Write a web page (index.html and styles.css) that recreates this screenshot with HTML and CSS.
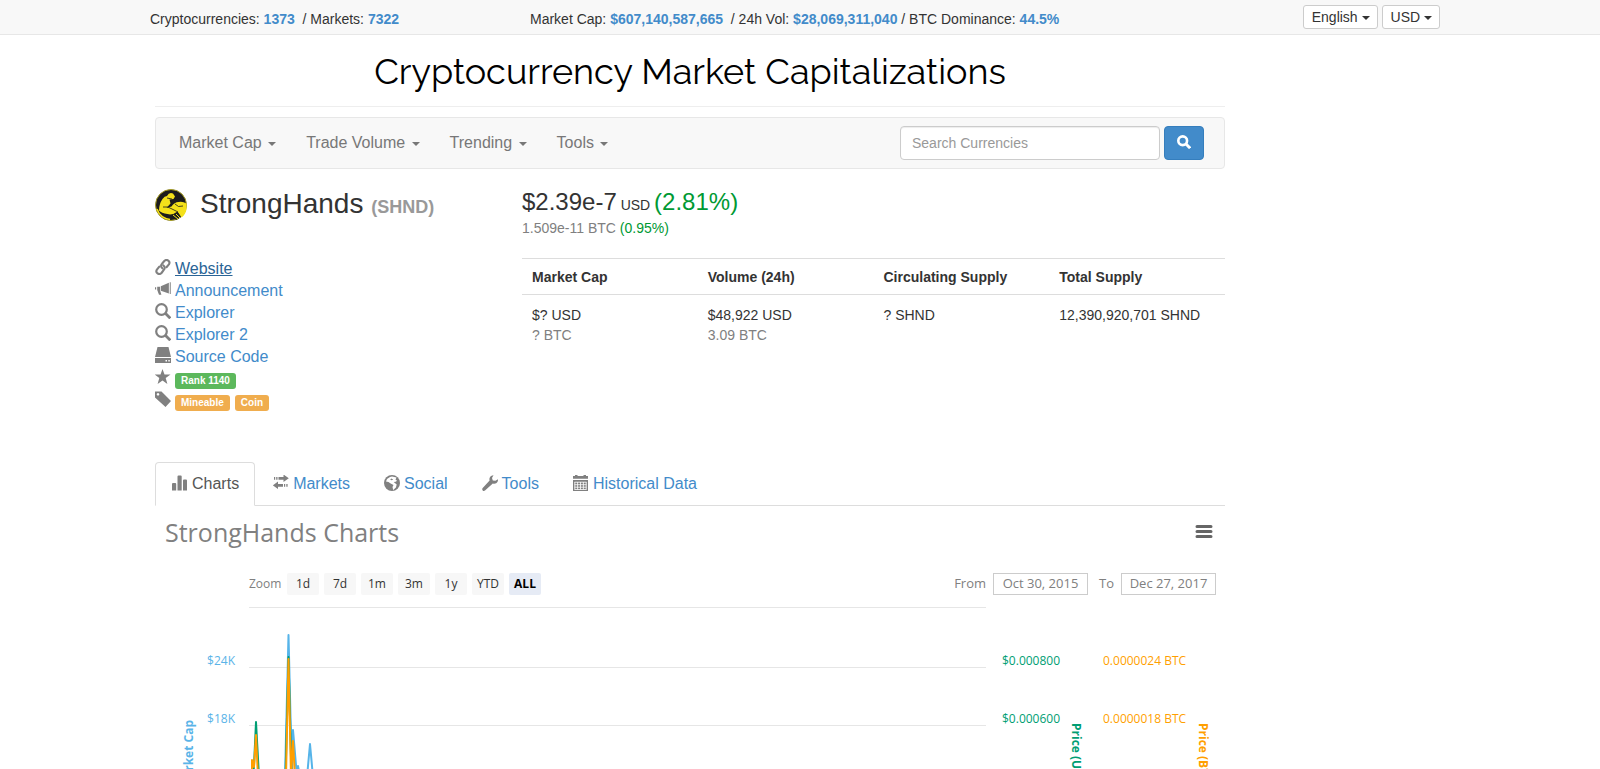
FILE: index.html
```html
<!DOCTYPE html>
<html lang="en">
<head>
<meta charset="utf-8">
<title>StrongHands (SHND) | Cryptocurrency Market Capitalizations</title>
<link rel="stylesheet" href="styles.css">
</head>
<body>
<svg class="sprite" aria-hidden="true">
  <symbol id="i-search" viewBox="0 0 16 16"><circle cx="6.5" cy="6.500" r="5.300" fill="none" stroke="currentColor" stroke-width="2.2"/><path d="M10.300 10.300l5 5" stroke="currentColor" stroke-width="2.8"/></symbol>
  <symbol id="i-search-bold" viewBox="0 0 16 16"><circle cx="6.5" cy="6.500" r="5" fill="none" stroke="currentColor" stroke-width="3"/><path d="M10 10l5 5" stroke="currentColor" stroke-width="3.400"/></symbol>
  <symbol id="i-link" viewBox="0 0 16 16"><g fill="none" stroke="currentColor" stroke-width="2.1" stroke-linecap="round" stroke-linejoin="round"><path d="M7.500 9.300C5.500 8 5.800 6 7 4.700L9.300 2c2.500-2.500 6.500.3 4.600 3.400L11.500 8.200"/><path d="M8.300 6.300c2 1.300 1.700 3.300.5 4.600L6.500 14c-2.500 2.500-6.500-.3-4.600-3.400L4.300 7.600"/></g></symbol>
  <symbol id="i-horn" viewBox="0 0 18 16"><g fill="currentColor"><path d="M6.500 4.800L15.600 1v12L6.500 10zM16.600.5h1.100v13h-1.100zM2.500 5.500h3.200v4.300l1.500 4.700H4.500L2.500 9zM0 6h1.300v2.600H0z"/></g></symbol>
  <symbol id="i-drive" viewBox="0 0 16 16"><path fill="currentColor" fill-rule="evenodd" d="M2.500 0h11L16 10H0zM0 11h16v5H0zM10.500 13v1.500H12V13zM13.300 13v1.500h1.500V13z"/></symbol>
  <symbol id="i-star" viewBox="0 0 16 16"><path fill="currentColor" d="M7.500 0l2 5.500h6L10.700 9l1.700 6-4.900-3.600L2.600 15l1.700-6L-.5 5.500h6z"/></symbol>
  <symbol id="i-tag" viewBox="0 0 16 16"><path fill="currentColor" fill-rule="evenodd" d="M0 .5h6.500L16 10l-5.500 6L0 6.500zM3 2a1.300 1.300 0 1 0 .01 0z"/></symbol>
  <symbol id="i-bars" viewBox="0 0 16 16"><path fill="currentColor" d="M0 9q0-1 1-1h2.200q1 0 1 1v6.500H0zM5.500 1.500q0-1 1-1h2.200q1 0 1 1v14H5.500zM11 5.500q0-1 1-1h2q1 0 1 1v10h-4z"/></symbol>
  <symbol id="i-transfer" viewBox="0 0 16 16"><path fill="currentColor" d="M1 2h1.200v2.700H1zM3.200 2h1.300v2.700H3.200zM5.500 2h5V-.5L15.800 3.300 10.500 7V4.700h-5zM5 6.500V9h5v2.700H5V14L-.2 10.300zM11 9h1.200v2.700H11zM13.300 9h1.300v2.700h-1.300z"/></symbol>
  <symbol id="i-globe" viewBox="0 0 16 16"><circle cx="8" cy="8" r="8" fill="currentColor"/><path fill="#fff" d="M8 1.600l4.500 1-1 1.900 1.500 1.300-1.300 1-2 .3 3 2.300-.8 3-2.700 2.500-.7-2.800 1-2.200-2.800-1.500L4.500 7 2 6.500 3 4l3-2zM7.200 3.500l-1 1.300 1.600.5 1.500-.8z"/></symbol>
  <symbol id="i-wrench" viewBox="0 0 16 16"><path fill="currentColor" d="M11.500.2L10 3l.8 2.400 2.600.4L16 4.200q.2 3-1.800 4-1.600.8-3.400.2L3 15.500q-1.200.9-2.300-.1-1-1.200 0-2.400L7.600 5.500Q7 3.300 8.200 1.700 9.500.1 11.500.2z"/></symbol>
  <symbol id="i-calendar" viewBox="0 0 16 16"><path fill="currentColor" d="M0 1h2V0h2.500v1h6V0H13v1h2v2.800H0zM0 5h15v11H0z"/><path stroke="#fff" stroke-width=".8" fill="none" d="M1.500 7.200h12M1.500 9.700h12M1.500 12.200h12M1.500 14.500h12M1.800 7v7.500M4.600 7v7.500M7.500 7v7.500M10.400 7v7.500M13.200 7v7.500"/></symbol>
</svg>

<header class="topbar">
  <div class="topbar-inner">
    <div>Cryptocurrencies: <a class="figure" href="#">1373</a> &nbsp;/ Markets: <a class="figure" href="#">7322</a></div>
    <div>Market Cap: <a class="figure" href="#">$607,140,587,665</a> &nbsp;/ 24h Vol: <a class="figure" href="#">$28,069,311,040</a> / BTC Dominance: <a class="figure" href="#">44.5%</a></div>
    <div class="pickers">
      <button class="picker" type="button">English <span class="caret"></span></button>
      <button class="picker" type="button">USD <span class="caret"></span></button>
    </div>
  </div>
</header>

<div class="container">
<main>
  <h1 class="site-title">Cryptocurrency Market Capitalizations</h1>

  <nav class="navbar">
    <a href="#">Market Cap <span class="caret"></span></a>
    <a href="#">Trade Volume <span class="caret"></span></a>
    <a href="#">Trending <span class="caret"></span></a>
    <a href="#">Tools <span class="caret"></span></a>
    <form class="search">
      <input type="text" placeholder="Search Currencies" aria-label="Search Currencies">
      <button type="button" aria-label="Search"><svg width="14" height="14"><use href="#i-search-bold"/></svg></button>
    </form>
  </nav>

  <section class="coin">
    <div>
      <h2 class="coin-name">
        <svg width="32" height="32" viewBox="0 0 32 32" aria-hidden="true">
          <circle cx="16" cy="16" r="15.500" fill="#1c1c1c" stroke="#a89e22"/>
          <path fill="#f4e11a" d="M12 7q2-4 6-2.500l2 3-1.500 2.500-4 .5 1 4-4 4.500 5-1.500q3-4.500 7-4.500 4-1 8 1.500v6q-1 5-5 8l-4-6q-5 4-10 2.500-6-1-8.500-3.500Q4 15 7.500 10q2-3 4.500-3z"/>
          <path stroke="#1c1c1c" stroke-width=".8" fill="none" d="M8 18q5-1 9 2l6 3M20 15q3 4 8 2M12 9l5 1"/>
          <path fill="#1c1c1c" d="M17 26l6-2 3 4-5 3z"/>
          <path stroke="#f4e11a" fill="none" d="M18 26l5 4M21 25l4 4"/>
          <path stroke="#f4e11a" stroke-width="1.500" fill="none" d="M2 20q3 9 13 10.500"/>
        </svg>
        <span>StrongHands <small>(SHND)</small></span>
      </h2>
      <ul class="links">
        <li><svg class="icon"><use href="#i-link"/></svg><a class="hovered" href="#">Website</a></li>
        <li><svg class="icon"><use href="#i-horn"/></svg><a href="#">Announcement</a></li>
        <li><svg class="icon"><use href="#i-search"/></svg><a href="#">Explorer</a></li>
        <li><svg class="icon"><use href="#i-search"/></svg><a href="#">Explorer 2</a></li>
        <li><svg class="icon"><use href="#i-drive"/></svg><a href="#">Source Code</a></li>
        <li><svg class="icon"><use href="#i-star"/></svg><span class="label rank">Rank 1140</span></li>
        <li><svg class="icon"><use href="#i-tag"/></svg><span class="label">Mineable</span><span class="label">Coin</span></li>
      </ul>
    </div>
    <div>
      <div class="price">$2.39e-7<small> USD </small><span class="up">(2.81%)</span></div>
      <div class="price-btc">1.509e-11 BTC <span class="up">(0.95%)</span></div>
      <table class="stats">
        <thead><tr><th>Market Cap</th><th>Volume (24h)</th><th>Circulating Supply</th><th>Total Supply</th></tr></thead>
        <tbody><tr>
          <td>$? USD<br><span class="muted">? BTC</span></td>
          <td>$48,922 USD<br><span class="muted">3.09 BTC</span></td>
          <td>? SHND</td>
          <td>12,390,920,701 SHND</td>
        </tr></tbody>
      </table>
    </div>
  </section>

  <nav class="tabs">
    <a class="active" href="#"><svg class="icon"><use href="#i-bars"/></svg>Charts</a>
    <a href="#"><svg class="icon"><use href="#i-transfer"/></svg>Markets</a>
    <a href="#"><svg class="icon"><use href="#i-globe"/></svg>Social</a>
    <a href="#"><svg class="icon"><use href="#i-wrench"/></svg>Tools</a>
    <a href="#"><svg class="icon"><use href="#i-calendar"/></svg>Historical Data</a>
  </nav>

  <section class="chart">
    <div class="chart-head">
      <h3>StrongHands Charts</h3>
      <button class="menu" type="button" aria-label="Chart menu"><svg width="18" height="14"><path d="M2 1.500h14M2 6.500h14M2 11.500h14" stroke="#666" stroke-width="3" stroke-linecap="round"/></svg></button>
    </div>
    <div class="range">
      <span class="zoom">Zoom</span>
      <button type="button">1d</button>
      <button type="button">7d</button>
      <button type="button">1m</button>
      <button type="button">3m</button>
      <button type="button">1y</button>
      <button type="button">YTD</button>
      <button class="selected" type="button">ALL</button>
      <div class="dates">
        <label for="from">From</label><input id="from" type="text" value="Oct 30, 2015">
        <label class="to" for="to">To</label><input id="to" type="text" value="Dec 27, 2017">
      </div>
    </div>
    <div class="plot">
      <svg class="axis cap">
        <text x="80" y="58" text-anchor="end">$24K</text>
        <text x="80" y="116" text-anchor="end">$18K</text>
        <text class="axis-title" transform="translate(38 113) rotate(-90)" text-anchor="end">Market Cap</text>
      </svg>
      <svg class="lines">
        <path class="grid" d="M0 .5h2000M0 60.500h2000M0 118.500h2000"/>
        <g class="series">
          <path class="cap" d="M36 170L39.500 28 43 170L44 123 48 170 49 159 51 170M58 170L61 137 64 170"/>
          <path class="usd" d="M4 170L5 159 7 115 10 170M36.500 170L39.500 50 42.500 170"/>
          <path class="btc" d="M3 170V153L5 160 7 128 9 170M37 170L39.500 52 42 170 44 134 46 170"/>
        </g>
      </svg>
      <svg class="axis prices">
        <text class="usd" x="16" y="58">$0.000800</text>
        <text class="usd" x="16" y="116">$0.000600</text>
        <text class="usd axis-title" transform="translate(86 116) rotate(90)">Price (USD)</text>
        <text class="btc" x="117" y="58">0.0000024 BTC</text>
        <text class="btc" x="117" y="116">0.0000018 BTC</text>
        <text class="btc axis-title" transform="translate(213 116) rotate(90)">Price (BTC)</text>
      </svg>
    </div>
  </section>
</main>
</div>
</body>
</html>
```
FILE: styles.css
```css
* { box-sizing: border-box; }
body {
  margin: 0;
  font: 16px/22px "Liberation Sans", Arial, sans-serif;
  color: #333;
  background: #fff;
}
a { color: #428bca; text-decoration: none; }
button, input { font: inherit; color: inherit; }
button { cursor: pointer; }
.sprite { display: none; }
.icon { width: 16px; height: 16px; flex: none; color: gray; overflow: visible; }
.caret {
  display: inline-block;
  margin-left: 2px;
  vertical-align: middle;
  border: 4px solid transparent;
  border-top-color: currentColor;
  border-bottom: 0;
}

.topbar { background: #f8f8f8; border-bottom: 1px solid #e7e7e7; font-size: 14px; }
.topbar-inner {
  display: grid;
  grid-template-columns: 380px 1fr auto;
  align-items: center;
  max-width: 1300px;
  height: 34px;
  margin: 0 auto;
  padding: 3px 10px 0 0;
}
.figure { font-weight: bold; }
.pickers { display: flex; gap: 4px; padding-bottom: 3px; }
.picker {
  height: 24px;
  padding: 0 7px 0 8px;
  line-height: 20px;
  background: #fff;
  border: 1px solid #ccc;
  border-radius: 3px;
}
.picker .caret { margin-left: 0; }

.container {
  display: grid;
  grid-template-columns: minmax(0, 1070px) 1fr;
  max-width: 1290px;
  margin: 0 auto;
}
.site-title {
  margin: 0 0 10px;
  padding: 16px 0 15px;
  border-bottom: 1px solid #eee;
  font: 400 36px/40px Raleway, Lato, sans-serif;
  color: #000;
  text-align: center;
}
.navbar {
  display: flex;
  align-items: center;
  height: 52px;
  padding: 0 20px 0 8px;
  background: #f8f8f8;
  border: 1px solid #e7e7e7;
  border-radius: 4px;
}
.navbar a { padding: 0 15px; color: #777; }
.search { display: flex; gap: 4px; margin-left: auto; }
.search input {
  width: 260px;
  height: 34px;
  padding: 6px 11px;
  font-size: 14px;
  border: 1px solid #ccc;
  border-radius: 4px;
  box-shadow: inset 0 1px 1px rgba(0, 0, 0, .075);
}
.search input::placeholder { color: #999; }
.search button {
  width: 40px;
  height: 34px;
  padding: 2px 0 0;
  color: #fff;
  background: #428bca;
  border: 1px solid #357ebd;
  border-radius: 4px;
}

.coin {
  display: grid;
  grid-template-columns: 367px 1fr;
  padding: 20px 0 51px;
}
.coin-name {
  display: flex;
  align-items: center;
  gap: 13px;
  height: 32px;
  margin: 0 0 36px;
  font-size: 28px;
  font-weight: normal;
}
.coin-name small { font-size: 18px; font-weight: bold; color: #999; }
.links { margin: 0; padding: 0; list-style: none; }
.links li { display: flex; gap: 4px; height: 22px; padding-top: 1px; }
.links .icon { margin-top: 1px; }
.links .label + .label { margin-left: 1px; }
.hovered { color: #2a6496; text-decoration: underline; }
.label {
  align-self: flex-end;
  height: 16px;
  padding: 0 6px;
  font-size: 10px;
  font-weight: bold;
  line-height: 16px;
  color: #fff;
  background: #f0ad4e;
  border-radius: 3px;
}
.label.rank { background: #5cb85c; }

.price { font-size: 24px; line-height: 26px; }
.price small { font-size: 14px; }
.price-btc { font-size: 14px; line-height: 20px; color: gray; }
.up { color: #009933; }
.muted { color: gray; }
.stats {
  width: 100%;
  margin-top: 20px;
  table-layout: fixed;
  border-collapse: collapse;
  font-size: 14px;
  line-height: 20px;
  text-align: left;
}
.stats th { padding: 8px 10px 7px; border-top: 1px solid #ddd; border-bottom: 1px solid #ddd; }
.stats td { padding: 10px; vertical-align: top; white-space: nowrap; }

.tabs { display: flex; gap: 2px; border-bottom: 1px solid #ddd; }
.tabs a {
  display: flex;
  gap: 4px;
  height: 43px;
  padding: 10px 15px;
  border: 1px solid transparent;
}
.tabs .icon { margin-top: 2px; }
.tabs .active {
  height: 44px;
  margin-bottom: -1px;
  padding-left: 16px;
  color: #555;
  background: #fff;
  border-color: #ddd;
  border-bottom-color: #fff;
  border-radius: 4px 4px 0 0;
}

.chart { font: 12px/22px "Open Sans", "Noto Sans", sans-serif; color: gray; }
.chart-head {
  display: flex;
  align-items: center;
  justify-content: space-between;
  padding: 9px 12px 11px 10px;
}
.chart-head h3 { margin: 0; font-size: 25px; font-weight: normal; line-height: 34px; }
.menu { height: 14px; padding: 0; line-height: 0; background: none; border: 0; }
.range { display: flex; gap: 5px; padding: 13px 9px 12px 94px; }
.range .zoom { width: 33px; }
.range button {
  width: 32px;
  height: 22px;
  padding: 0;
  line-height: 20px;
  color: #333;
  background: #f7f7f7;
  border: 0;
  border-radius: 2px;
}
.range .selected { font-weight: bold; color: #000; background: #e6ebf5; }
.dates { display: flex; gap: 7px; margin-left: auto; font-size: 13px; line-height: 20px; }
.dates .to { margin-left: 4px; }
.dates input {
  width: 95px;
  height: 22px;
  padding: 0 0 2px;
  border: 1px solid #ccc;
  text-align: center;
}
.plot { display: grid; grid-template-columns: 94px 1fr 239px; }
.plot svg { display: block; width: 100%; height: 162px; }
.axis { font-size: 12px; }
.axis-title { font-weight: bold; }
.axis.cap { fill: #5ab4e8; }
.axis .usd { fill: #009e73; }
.axis .btc { fill: #ff9f00; }
.grid { stroke: #e6e6e6; }
.series { fill: none; stroke-width: 2; stroke-linejoin: round; }
.series .cap { stroke: #56b4e9; }
.series .usd { stroke: #009e73; }
.series .btc { stroke: #ff9f00; }
```
